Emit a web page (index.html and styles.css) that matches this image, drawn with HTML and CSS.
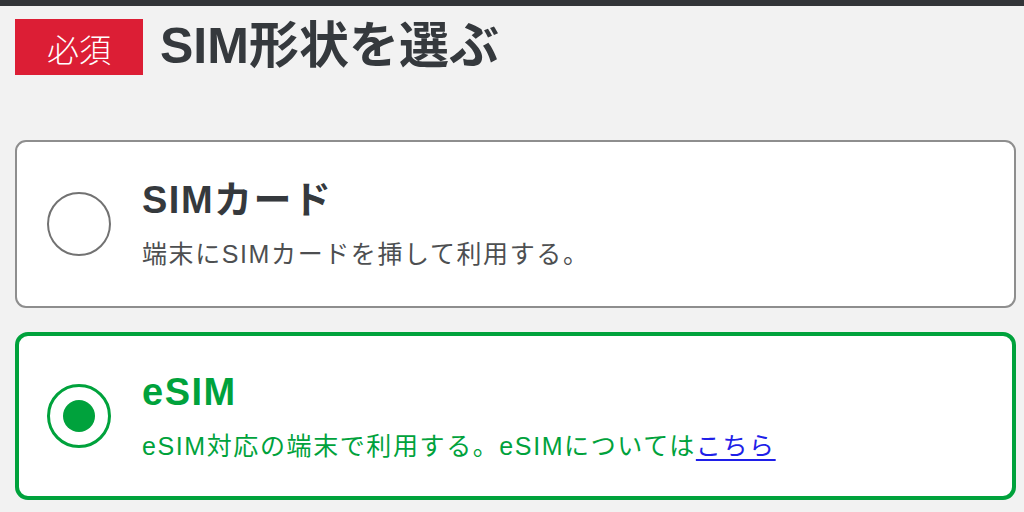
FILE: index.html
```html
<!DOCTYPE html>
<html lang="ja">
<head>
<meta charset="utf-8">
<title>SIM形状を選ぶ</title>
<link rel="stylesheet" href="styles.css">
</head>
<body>
<div class="topbar"></div>
<main class="page">
  <header class="header">
    <span class="badge">必須</span>
    <h1 class="title">SIM形状を選ぶ</h1>
  </header>
  <div class="options">
    <label class="option">
      <span class="radio"></span>
      <span class="option-text">
        <span class="option-title">SIMカード</span>
        <span class="option-desc">端末にSIMカードを挿して利用する。</span>
      </span>
    </label>
    <label class="option option-selected">
      <span class="radio radio-checked"><span class="radio-dot"></span></span>
      <span class="option-text">
        <span class="option-title">eSIM</span>
        <span class="option-desc">eSIM対応の端末で利用する。eSIMについては<a class="link" href="#">こちら</a></span>
      </span>
    </label>
  </div>
</main>
</body>
</html>
```

FILE: styles.css
```css
html, body {
  margin: 0;
  padding: 0;
}

body {
  background: #f2f2f2;
  font-family: "Liberation Sans", "Noto Sans CJK JP", sans-serif;
  color: #35393d;
}

.topbar {
  height: 6px;
  background: #323538;
}

.page {
  padding: 0 8px 0 15px;
}

.header {
  display: flex;
  align-items: center;
  margin-top: 13px;
}

.badge {
  width: 128px;
  height: 56px;
  display: flex;
  align-items: center;
  justify-content: center;
  background: #dc1e35;
  color: #ffffff;
  font-size: 32px;
  font-weight: 300;
  padding-top: 1px;
  box-sizing: border-box;
}

.title {
  margin: 0 0 3px 17px;
  font-size: 50px;
  line-height: 52px;
  font-weight: 700;
  color: #35393d;
}

.options {
  margin-top: 65px;
  display: flex;
  flex-direction: column;
  gap: 24px;
}

.option {
  display: flex;
  align-items: center;
  height: 168px;
  box-sizing: border-box;
  background: #ffffff;
  border: 2px solid #8e8e8e;
  border-radius: 11px;
  padding-left: 30px;
  gap: 31px;
}

.option-selected {
  border: 4px solid #00a23c;
  border-radius: 13px;
  padding-left: 28px;
  color: #00a23c;
}

.radio {
  flex: none;
  width: 64px;
  height: 64px;
  box-sizing: border-box;
  border: 2px solid #727272;
  border-radius: 50%;
  display: flex;
  align-items: center;
  justify-content: center;
}

.radio-checked {
  border: 3px solid #00a23c;
}

.radio-dot {
  width: 32px;
  height: 32px;
  border-radius: 50%;
  background: #00a23c;
}

.option-text {
  display: flex;
  flex-direction: column;
  gap: 15px;
  margin-bottom: 2px;
}

.option-title {
  font-size: 38px;
  line-height: 46px;
  font-weight: 700;
  letter-spacing: 1.5px;
  color: #35393d;
}

.option-desc {
  font-size: 25px;
  line-height: 32px;
  letter-spacing: 1.6px;
  color: #4d4f51;
}

.option-selected .option-title,
.option-selected .option-desc {
  color: #00a23c;
}

.link {
  color: #1f1fe8;
  text-decoration: underline;
  text-underline-offset: 4px;
}
```
